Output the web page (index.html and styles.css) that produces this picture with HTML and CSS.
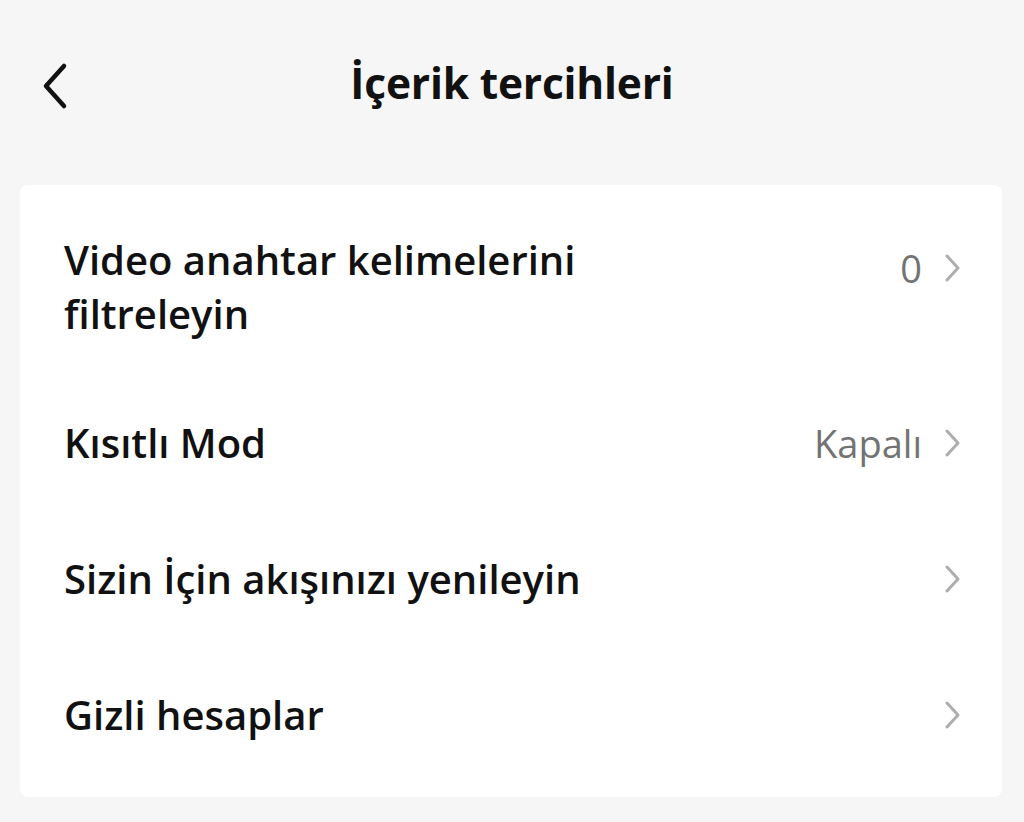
FILE: index.html
```html
<!DOCTYPE html>
<html lang="tr">
<head>
<meta charset="utf-8">
<title>İçerik tercihleri</title>
<link rel="stylesheet" href="styles.css">
</head>
<body>
<div class="screen">
  <header class="topbar">
    <button class="back" aria-label="Geri">
      <svg width="30" height="48" viewBox="0 0 30 48"><polyline points="24,4 6,24 24,44" fill="none" stroke="#111" stroke-width="4.5" stroke-linecap="round" stroke-linejoin="round"/></svg>
    </button>
    <h1 class="title">İçerik tercihleri</h1>
  </header>
  <section class="card">
    <div class="row row-tall">
      <div class="label">Video anahtar kelimelerini<br>filtreleyin</div>
      <div class="right"><span class="value">0</span><svg class="chev" width="16" height="28" viewBox="0 0 16 28"><polyline points="3,2 14,14 3,26" fill="none" stroke="#adadad" stroke-width="3" stroke-linecap="round" stroke-linejoin="round"/></svg></div>
    </div>
    <div class="row">
      <div class="label">Kısıtlı Mod</div>
      <div class="right"><span class="value">Kapalı</span><svg class="chev" width="16" height="28" viewBox="0 0 16 28"><polyline points="3,2 14,14 3,26" fill="none" stroke="#adadad" stroke-width="3" stroke-linecap="round" stroke-linejoin="round"/></svg></div>
    </div>
    <div class="row">
      <div class="label">Sizin İçin akışınızı yenileyin</div>
      <div class="right"><svg class="chev" width="16" height="28" viewBox="0 0 16 28"><polyline points="3,2 14,14 3,26" fill="none" stroke="#adadad" stroke-width="3" stroke-linecap="round" stroke-linejoin="round"/></svg></div>
    </div>
    <div class="row">
      <div class="label">Gizli hesaplar</div>
      <div class="right"><svg class="chev" width="16" height="28" viewBox="0 0 16 28"><polyline points="3,2 14,14 3,26" fill="none" stroke="#adadad" stroke-width="3" stroke-linecap="round" stroke-linejoin="round"/></svg></div>
    </div>
  </section>
</div>
</body>
</html>
```

FILE: styles.css
```css
html, body {
  margin: 0;
  padding: 0;
  background: #f6f6f6;
}
body {
  font-family: "Open Sans", "Liberation Sans", Arial, sans-serif;
  color: #111;
}
.screen {
  width: 1024px;
  height: 822px;
  overflow: hidden;
}
.topbar {
  position: relative;
  height: 185px;
  display: flex;
  align-items: flex-start;
  justify-content: center;
}
.back {
  position: absolute;
  left: 40px;
  top: 62px;
  padding: 0;
  border: 0;
  background: none;
  display: flex;
}
.title {
  margin: 55px 0 0;
  font-size: 42.5px;
  font-weight: 700;
  line-height: 56px;
  letter-spacing: -0.2px;
}
.card {
  margin: 0 22px 0 20px;
  background: #fff;
  border-radius: 8px;
  padding-bottom: 14px;
}
.row {
  height: 136px;
  padding: 0 42px 0 44px;
  display: flex;
  align-items: center;
  justify-content: space-between;
}
.row-tall {
  height: 190px;
  box-sizing: border-box;
  padding-top: 48px;
  align-items: flex-start;
}
.label {
  font-size: 40px;
  font-weight: 600;
  line-height: 54px;
  color: #111;
}
.right {
  display: flex;
  align-items: center;
  gap: 22px;
  height: 54px;
}
.row-tall .right {
  margin-top: 8px;
}
.value {
  font-size: 38px;
  color: #737373;
}
.chev {
  display: block;
}
```
